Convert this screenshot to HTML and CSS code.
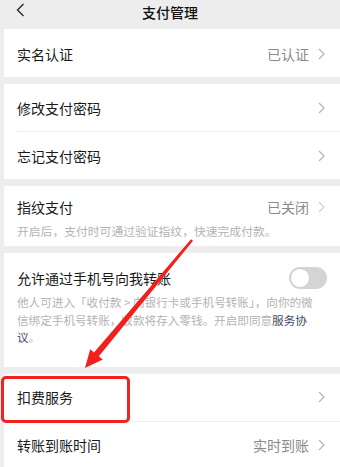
FILE: index.html
```html
<!DOCTYPE html>
<html lang="zh">
<head>
<meta charset="utf-8">
<title>支付管理</title>
<link rel="stylesheet" href="styles.css">
</head>
<body>
<div class="page">
  <header class="topbar">
    <svg class="back" width="9" height="14" viewBox="0 0 9 14"><polyline points="7.5,1 1.5,7 7.5,13" fill="none" stroke="#222" stroke-width="1.3"/></svg>
    <div class="title">支付管理</div>
  </header>

  <section class="card">
    <div class="row first">
      <span class="label">实名认证</span>
      <span class="right"><span class="value">已认证</span><svg class="chev" width="7" height="12" viewBox="0 0 7 12"><polyline points="1,1 6,6 1,11" fill="none" stroke="#b4b4b4" stroke-width="1.2"/></svg></span>
    </div>
  </section>

  <section class="card">
    <div class="row">
      <span class="label">修改支付密码</span>
      <span class="right"><svg class="chev" width="7" height="12" viewBox="0 0 7 12"><polyline points="1,1 6,6 1,11" fill="none" stroke="#b4b4b4" stroke-width="1.2"/></svg></span>
    </div>
    <div class="divider"></div>
    <div class="row tall">
      <span class="label">忘记支付密码</span>
      <span class="right"><svg class="chev" width="7" height="12" viewBox="0 0 7 12"><polyline points="1,1 6,6 1,11" fill="none" stroke="#b4b4b4" stroke-width="1.2"/></svg></span>
    </div>
  </section>

  <section class="card block fp">
    <div class="head">
      <span class="label">指纹支付</span>
      <span class="right"><span class="value">已关闭</span><svg class="chev" width="7" height="12" viewBox="0 0 7 12"><polyline points="1,1 6,6 1,11" fill="none" stroke="#d0d0d0" stroke-width="1.2"/></svg></span>
    </div>
    <p class="desc">开启后，支付时可通过验证指纹，快速完成付款。</p>
  </section>

  <section class="card block phone">
    <div class="head">
      <span class="label">允许通过手机号向我转账</span>
      <span class="toggle"><span class="knob"></span></span>
    </div>
    <p class="desc">他人可进入「收付款 &gt; 向银行卡或手机号转账」，向你的微<br>信绑定手机号转账，收款将存入零钱。开启即同意<span class="link">服务协</span><br><span class="link">议</span>。</p>
  </section>

  <section class="card">
    <div class="row">
      <span class="label">扣费服务</span>
      <span class="right"><svg class="chev" width="7" height="12" viewBox="0 0 7 12"><polyline points="1,1 6,6 1,11" fill="none" stroke="#b4b4b4" stroke-width="1.2"/></svg></span>
    </div>
    <div class="divider"></div>
    <div class="row tall">
      <span class="label">转账到账时间</span>
      <span class="right"><span class="value">实时到账</span><svg class="chev" width="7" height="12" viewBox="0 0 7 12"><polyline points="1,1 6,6 1,11" fill="none" stroke="#b4b4b4" stroke-width="1.2"/></svg></span>
    </div>
  </section>

  <div class="highlight"></div>
  <svg class="arrow" width="340" height="467" viewBox="0 0 340 467">
    <polygon fill="#f2201c" points="193,240.8 191,239.2 94,352.5 90.2,349.3 85,368 102.8,359.5 98.9,356.2"/>
  </svg>
</div>
</body>
</html>
```

FILE: styles.css
```css
html, body {
  margin: 0;
  padding: 0;
}
body {
  background: #ededed;
  font-family: "Noto Sans CJK SC", "Noto Sans", sans-serif;
  color: #1a1a1a;
}
.page {
  position: relative;
  width: 340px;
  height: 467px;
  overflow: hidden;
}
.topbar {
  position: relative;
  height: 29px;
  display: flex;
  justify-content: center;
}
.back {
  position: absolute;
  left: 16px;
  top: 3px;
}
.title {
  font-size: 14px;
  line-height: 24px;
  font-weight: 500;
  color: #111;
}
.card {
  margin-left: 4px;
  background: #fff;
  margin-bottom: 7px;
}
.row {
  display: flex;
  align-items: center;
  justify-content: space-between;
  height: 47px;
  padding: 0 15px 0 13px;
}
.row.first {
  height: 47px;
  padding-top: 1px;
}
.row.tall {
  height: 47px;
}
.label {
  font-size: 14px;
  line-height: 20px;
  color: #1a1a1a;
}
.right {
  display: flex;
  align-items: center;
  gap: 9px;
}
.value {
  font-size: 14px;
  line-height: 20px;
  color: #8a8a8a;
}
.chev {
  display: block;
}
.divider {
  height: 1px;
  background: #efefef;
  margin-left: 13px;
}
.block {
  padding: 11px 15px 7px 13px;
}
.head {
  display: flex;
  align-items: center;
  justify-content: space-between;
  height: 20px;
}
.desc {
  margin: 5px 0 0;
  font-size: 11.8px;
  line-height: 17px;
  color: #b3b3b3;
  white-space: nowrap;
}
.phone {
  padding: 15px 13px 20px 13px;
}
.phone .desc {
  margin-top: 6px;
  line-height: 17.5px;
  font-size: 11.6px;
}
.link {
  color: #3f4a66;
}
.toggle {
  position: relative;
  width: 38px;
  height: 22px;
  border-radius: 11px;
  background: #d4d4d4;
}
.knob {
  position: absolute;
  left: 1px;
  top: 1px;
  width: 18px;
  height: 18px;
  border-radius: 50%;
  background: #fff;
  border: 1px solid #cfcfcf;
}
.highlight {
  position: absolute;
  left: 1px;
  top: 376px;
  width: 123px;
  height: 41px;
  border: 3px solid #f0231f;
  border-radius: 5px;
}
.arrow {
  position: absolute;
  left: 0;
  top: 0;
}
```
